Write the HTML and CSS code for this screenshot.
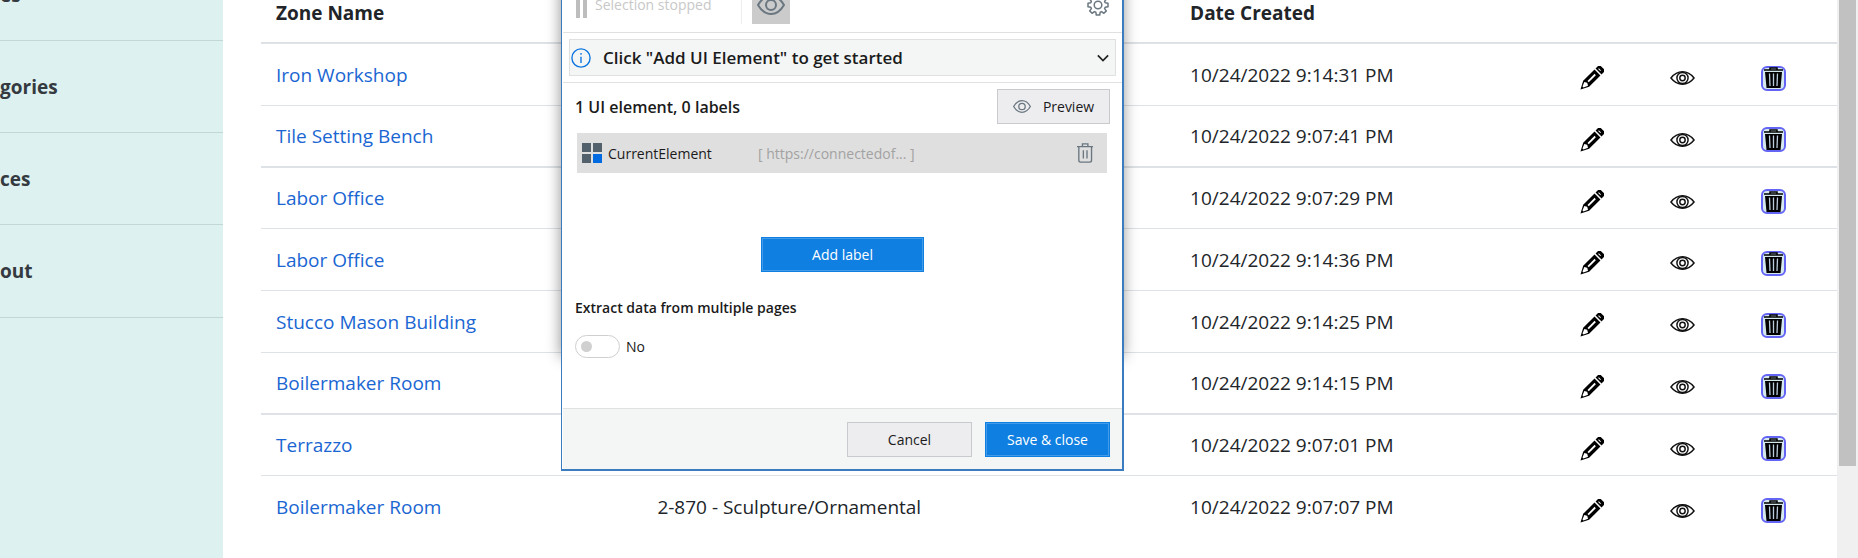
FILE: index.html
```html
<!DOCTYPE html>
<html lang="en">
<head>
<meta charset="utf-8">
<title>Zones</title>
<link rel="stylesheet" href="styles.css">
<script src="app.js" defer></script>
</head>
<body>
<svg class="sprite" aria-hidden="true">
  <symbol id="pencil" viewBox="0 0 24 24">
    <g transform="translate(.5 23.500) rotate(-45)">
      <path d="M0 0 8 -4.200H24V4.200H8Z"/>
      <path d="M25.500 -4.200H29Q31 -4.200 31 -2V2Q31 4.200 29 4.200H25.500Z"/>
      <path d="M3.500 -.7 8 -2.600 9.500 0 8 2.600 3.500 .7Z" fill="#fff"/>
      <path d="M11 -.2H21" stroke="#fff" stroke-width="1.800"/>
      <path d="M27.500 -2V1" stroke="#fff" stroke-width="1"/>
    </g>
  </symbol>
  <symbol id="eye" viewBox="0 0 26 16">
    <g fill="none" stroke="currentColor" stroke-width="1.500">
      <path d="M1 8Q6 1.500 13 1.500T25 8Q20 14.500 13 14.500T1 8Z"/>
      <circle cx="13" cy="8" r="5.800"/><circle cx="13" cy="8" r="2.800"/>
    </g>
  </symbol>
  <symbol id="bin" viewBox="0 0 21 22">
    <path d="M1 3H20M7 3V1H14V3" fill="none" stroke="#000" stroke-width="1.500"/>
    <path d="M2 5H19L17.500 21H3.500Z"/>
    <path d="M6.500 6.500 7 19M10.500 6.500V19M14.500 6.500 14 19" stroke="#bcd" stroke-width="1.300"/>
  </symbol>
  <symbol id="view" viewBox="0 0 28 20">
    <g fill="none" stroke="currentColor" stroke-width="2">
      <path d="M1 10C8-2 20-2 27 10C20 22 8 22 1 10Z"/><circle cx="14" cy="10" r="5"/>
    </g>
  </symbol>
</svg>
<div class="page">
  <nav class="sidebar">
    <a href="#">es</a>
    <a href="#">gories</a>
    <a href="#">ces</a>
    <a href="#">out</a>
  </nav>
  <main class="content">
    <table class="zones">
      <thead><tr><th class="name">Zone Name</th><th class="trade"></th><th>Date Created</th><th class="tool"></th><th class="tool"></th><th class="tool last"></th></tr></thead>
      <tbody id="rows"></tbody>
    </table>
  </main>
  <div class="scrollbar"><div class="thumb"></div></div>
</div>
<div class="shade"></div>
<section class="dialog" aria-label="Extract data">
  <header class="toolbar">
    <span class="pause"></span>
    <span class="stopped">Selection stopped</span>
    <button class="watch" aria-label="Highlight"><svg><use href="#view"/></svg></button>
    <button class="gear" aria-label="Settings"><svg viewBox="0 0 22 22"><g fill="none" stroke="currentColor" stroke-width="1.500" stroke-linejoin="round"><path d="M9.300 1H12.700L13.200 3.800 14.600 4.400 16.900 2.700 19.300 5.100 17.600 7.400 18.200 8.800 21 9.300V12.700L18.200 13.200 17.600 14.600 19.300 16.900 16.900 19.300 14.600 17.600 13.200 18.200 12.700 21H9.300L8.800 18.200 7.400 17.600 5.100 19.300 2.700 16.900 4.400 14.600 3.800 13.200 1 12.700V9.300L3.800 8.800 4.400 7.400 2.700 5.100 5.100 2.700 7.400 4.400 8.800 3.800Z"/><circle cx="11" cy="11" r="3.800"/></g></svg></button>
  </header>
  <div class="hint">
    <button class="hint-box">
      <svg class="info" viewBox="0 0 22 22"><g fill="none" stroke="#0a74e0" stroke-width="1.500"><circle cx="11" cy="11" r="10"/><path d="M11 9.500V16.500M11 5.500V7.500"/></g></svg>
      <span>Click "Add UI Element" to get started</span>
      <svg class="chevron" viewBox="0 0 14 8"><path d="M1 1 7 7 13 1" fill="none" stroke="#222" stroke-width="2"/></svg>
    </button>
  </div>
  <div class="body">
    <div class="summary">
      <h2>1 UI element, 0 labels</h2>
      <button class="btn preview"><svg><use href="#view"/></svg>Preview</button>
    </div>
    <div class="element">
      <span class="tiles"><i></i><i></i><i></i><i></i></span>
      <span class="element-name">CurrentElement</span>
      <span class="url">[ https://connectedof... ]</span>
      <button class="remove" aria-label="Delete element"><svg viewBox="0 0 18 22"><g fill="none" stroke="currentColor" stroke-width="1.500"><path d="M0 4H18M6 4V1H12V4M2 4V19Q2 21 4 21H14Q16 21 16 19V4M7 8V17M11 8V17"/></g></svg></button>
    </div>
    <button class="btn primary add">Add label</button>
    <h3>Extract data from multiple pages</h3>
    <label class="switch"><input type="checkbox" role="switch"><span>No</span></label>
  </div>
  <footer class="actions">
    <button class="btn">Cancel</button>
    <button class="btn primary">Save &amp; close</button>
  </footer>
</section>
</body>
</html>
```
FILE: styles.css
```css
* { box-sizing: border-box; }
body { margin: 0; font-family: "Segoe UI", "Open Sans", sans-serif; font-size: 19px; color: #212529; background: #fff; overflow: hidden; }
button { font: inherit; color: inherit; padding: 0; border: 0; background: none; }
.sprite { position: absolute; width: 0; height: 0; }
.page { display: flex; height: 100vh; overflow: hidden; }

.sidebar { flex: none; width: 223px; background: #ddf1f0; overflow: hidden; display: flex; flex-direction: column; margin-top: -51px; }
.sidebar a { flex: none; height: 92px; display: flex; align-items: center; border-bottom: 1px solid #c2d8d7; color: #343a40; font-weight: 700; text-decoration: none; }
.sidebar a:last-child { height: 93px; }

.content { flex: 1; padding-left: 38px; }
.zones { width: 100%; border-spacing: 0; table-layout: fixed; }
.zones th { padding: 0 15px 16px; border-bottom: 2px solid #dee2e6; text-align: left; font-weight: 700; line-height: 26px; }
.zones td { height: 62px; padding: 0 15px; border-bottom: 1px solid #dee2e6; }
.zones tbody tr:nth-child(4n+2) td { border-bottom-width: 2px; }
.zones tbody tr:nth-child(4n+3) td { height: 61px; }
.zones tbody tr:last-child td { border-bottom: 0; }
.zones a { color: #1a66d2; text-decoration: none; }
.zones .name { width: 24.2%; }
.zones .trade { width: 33.8%; }
.zones .tool { width: 91px; text-align: center; padding: 5px 0 0; }
.zones .last { width: 109px; padding-right: 18px; }
.tool button { display: inline-flex; align-items: center; justify-content: center; width: 25px; height: 25px; color: #111; vertical-align: middle; }
.tool .pencil { width: 24px; height: 24px; }
.tool .eye { width: 25px; height: 16px; }
.tool .bin { width: 21px; height: 22px; }
.tool .delete { border: 2px solid #6464f5; border-radius: 6px; background: #d5e8ee; }

.scrollbar { flex: none; width: 21px; padding: 0 2px; background: #f0f0f0; }
.thumb { height: 466px; background: #c1c1c1; }

.shade { position: absolute; left: 561px; top: -20px; width: 562px; height: 375px; box-shadow: 0 2px 14px rgba(0,0,0,.45); }
.dialog { position: absolute; left: 561px; top: -22px; width: 563px; padding-left: 1px; background: #fff; border: solid #3b7cc0; border-width: 0 2px 2px 1px; color: #1b1b1b; font-size: 14px; }
.toolbar { display: flex; align-items: center; height: 55px; padding: 0 13px; border-bottom: 1px solid #e1e1e1; }
.pause { width: 11px; height: 26px; border: solid #bdbdbd; border-width: 0 4px; }
.stopped { margin-left: 8px; padding-right: 30px; border-right: 1px solid #eee; line-height: 38px; color: #c8c8c8; }
.watch { display: flex; align-items: center; justify-content: center; width: 38px; height: 38px; margin-left: 10px; background: #cbcbcb; color: #6a7780; }
.watch svg { width: 28px; height: 20px; }
.gear { margin-left: auto; width: 22px; height: 22px; color: #6a7780; }
.gear svg { display: block; }
.hint { padding: 6px; border-bottom: 1px solid #e1e1e1; }
.hint-box { display: flex; align-items: center; width: 100%; height: 37px; padding: 0 6px 0 1px; background: #f4f6f6; border: 1px solid #dfe1e1; font-size: 17px; font-weight: 600; text-align: left; }
.info { width: 20px; height: 20px; margin-right: 12px; }
.chevron { width: 12px; height: 8px; margin-left: auto; }
.body { padding: 6px 12px 0; height: 325px; }
.summary { display: flex; align-items: center; justify-content: space-between; }
h2, h3 { margin: 0; font-weight: 600; }
h2 { font-size: 16px; }
h3 { font-size: 14px; margin-top: 24px; line-height: 24px; }
.btn { display: flex; align-items: center; justify-content: center; width: 125px; height: 35px; background: #ededf0; border: 1px solid #c8cacd; }
.preview { width: 113px; gap: 12px; }
.preview svg { width: 18px; height: 13px; color: #6a7780; }
.primary { background: #0f7fe1; border-color: #0f7fe1; color: #fff; box-shadow: inset 0 0 0 1px #429be9; }
.element { display: flex; align-items: center; height: 40px; margin: 9px 3px 0 2px; padding: 0 12px 0 5px; background: #dfdfdf; }
.tiles { display: grid; grid-template-columns: 9px 9px; gap: 2px; margin-right: 6px; }
.tiles i { height: 9px; background: #52616b; }
.tiles i:last-child { background: #006ae0; }
.element-name { width: 150px; }
.url { color: #a2a2a2; }
.remove { margin-left: auto; width: 18px; height: 20px; color: #6a7780; }
.remove svg { display: block; height: 20px; }
.add { width: 163px; margin: 64px auto 0; }
.switch { display: flex; align-items: center; gap: 6px; margin-top: 15px; }
.switch input { appearance: none; width: 45px; height: 23px; margin: 0; padding: 5px; border: 1px solid #cfcfcf; border-radius: 12px; }
.switch input::before { content: ""; display: block; width: 11px; height: 11px; border-radius: 50%; background: #d0d0d0; }
.actions { display: flex; justify-content: flex-end; gap: 13px; padding: 13px 12px 12px; border-top: 1px solid #e1e1e1; background: #f4f6f6; }
```
FILE: app.js
```js
const zones = [
  ["Iron Workshop", "", "9:14:31"],
  ["Tile Setting Bench", "", "9:07:41"],
  ["Labor Office", "", "9:07:29"],
  ["Labor Office", "", "9:14:36"],
  ["Stucco Mason Building", "", "9:14:25"],
  ["Boilermaker Room", "", "9:14:15"],
  ["Terrazzo", "", "9:07:01"],
  ["Boilermaker Room", "2-870 - Sculpture/Ornamental", "9:07:07"]
];
const tool = (icon, label, cell = "", extra = "") =>
  `<td class="tool ${cell}"><button class="${extra}" aria-label="${label}"><svg class="${icon}"><use href="#${icon}"/></svg></button></td>`;
document.getElementById("rows").innerHTML = zones.map(([name, trade, time]) =>
  `<tr><td><a href="#">${name}</a></td><td>${trade}</td><td>10/24/2022 ${time} PM</td>` +
  tool("pencil", "Edit") + tool("eye", "View") + tool("bin", "Delete", "last", "delete") + "</tr>").join("");
```
